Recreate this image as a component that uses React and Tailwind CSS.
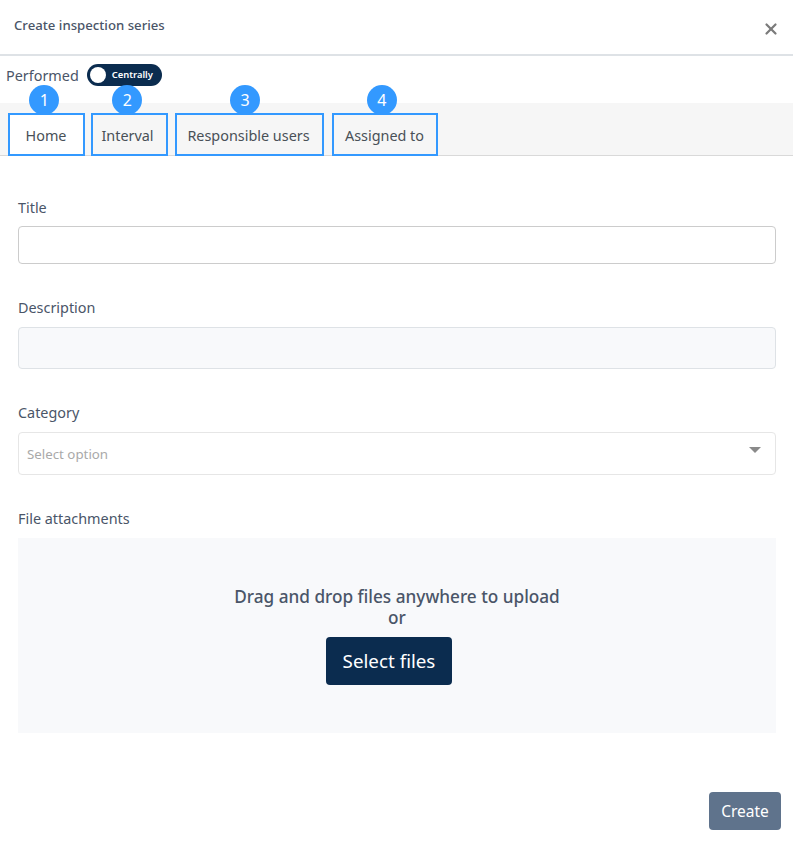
import React from "react";
import { X } from "lucide-react";

const tabs = [
  { label: "Home", number: 1, width: "w-[77px]", inset: "pr-px", active: true },
  { label: "Interval", number: 2, width: "w-[77px]", inset: "pr-[4px]" },
  { label: "Responsible users", number: 3, width: "w-[149px]", inset: "pr-[2px]" },
  { label: "Assigned to", number: 4, width: "w-[106px]", inset: "pr-px" },
];

function Tab({ tab }) {
  return (
    <div
      className={`relative flex h-[43px] ${tab.width} ${tab.inset} items-center justify-center border-2 border-[#3399ff] pt-[3px] text-[14.4px] text-[#495057] ${
        tab.active ? "bg-white" : "bg-[#f6f6f6]"
      }`}
    >
      {tab.label}
      <span className="absolute left-[47%] top-[-30px] flex h-[30px] w-[30px] -translate-x-1/2 items-center justify-center rounded-full bg-[#3399ff] text-[16px] text-white">
        {tab.number}
      </span>
    </div>
  );
}

export default function App() {
  return (
    <div className="h-[843px] w-[793px] overflow-hidden bg-white font-['Noto_Sans',sans-serif] text-[#4a5568]">
      <div className="flex h-[56px] items-start justify-between border-b-2 border-[#dee2e6] pl-[14px] pr-[13px]">
        <h1 className="mt-[16px] text-[13.2px] leading-[18px] font-medium">
          Create inspection series
        </h1>
        <X size={18} strokeWidth={3} className="mt-[20px] text-[#7b7b7b]" />
      </div>

      <div className="flex h-[47px] items-start pl-[6px] pt-[8px]">
        <span className="text-[14.4px] leading-[23px]">Performed</span>
        <div className="ml-2 flex h-[22px] w-[75px] items-center rounded-full bg-[#0b2c4f] pl-[3px]">
          <span className="h-4 w-4 rounded-full bg-white" />
          <span className="ml-[6px] text-[9.4px] font-semibold text-white">
            Centrally
          </span>
        </div>
      </div>

      <div className="flex h-[53px] items-end border-b border-[#d9d9d9] bg-[#f6f6f6] pl-2">
        <div className="mb-[-1px] flex">
          {tabs.map((tab, i) => (
            <div key={tab.number} className={i === 0 ? "" : i === 1 ? "ml-[6px]" : i === 2 ? "ml-[7px]" : "ml-2"}>
              <Tab tab={tab} />
            </div>
          ))}
        </div>
      </div>

      <div className="pl-[18px] pr-[17px]">
        <label className="mt-[42px] block text-[14.4px] leading-[20px]">Title</label>
        <div className="mt-[8px] h-[38px] rounded border border-[#cccccc] bg-white" />

        <label className="mt-[34px] block text-[14.4px] leading-[20px]">Description</label>
        <div className="mt-[9px] h-[42px] rounded border border-[#dee2e6] bg-[#f8f9fb]" />

        <label className="mt-[34px] block text-[14.4px] leading-[20px]">Category</label>
        <div className="mt-[9px] flex h-[43px] items-center justify-between rounded border border-[#e6e6e6] pl-2 pr-[14px]">
          <span className="pt-[2px] text-[13.3px] text-[#a9a9a9]">Select option</span>
          <span className="mb-[8px] h-0 w-0 border-x-[6px] border-t-[6px] border-x-transparent border-t-[#8a8a8a]" />
        </div>

        <label className="mt-[34px] block text-[14.4px] leading-[20px]">File attachments</label>
        <div className="mt-[9px] flex h-[195px] flex-col items-center bg-[#f8f9fb] pt-[48px]">
          <p className="text-[17.2px] leading-[21px] font-medium">
            Drag and drop files anywhere to upload
          </p>
          <p className="text-[17.2px] leading-[21px] font-medium">or</p>
          <button className="mr-[16px] mt-[9px] h-[48px] w-[126px] rounded bg-[#0b2c4f] text-[18.8px] text-white">
            Select files
          </button>
        </div>
      </div>

      <div className="mt-[59px] flex justify-end pr-3">
        <button className="h-[38px] w-[72px] rounded bg-[#5f738c] pt-[2px] text-[15.5px] text-white">
          Create
        </button>
      </div>
    </div>
  );
}
